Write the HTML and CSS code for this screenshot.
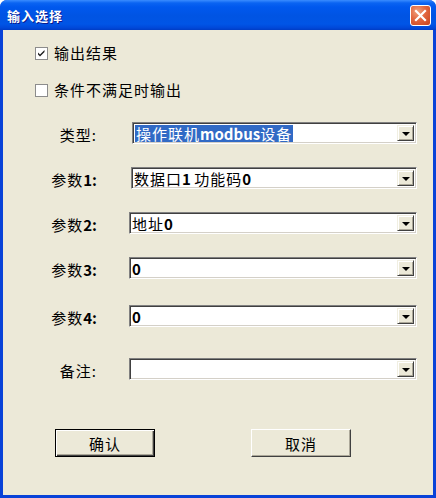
FILE: index.html
```html
<!DOCTYPE html>
<html lang="zh-CN">
<head>
<meta charset="utf-8">
<title>输入选择</title>
<link rel="stylesheet" href="styles.css">
</head>
<body>
<div class="window">
  <div class="titlebar">
    <span class="title">输入选择</span>
    <span class="close">
      <svg width="13" height="13" viewBox="0 0 13 13"><path d="M2 2 L11 11 M11 2 L2 11" stroke="#fff" stroke-width="2.2" stroke-linecap="square"/></svg>
    </span>
  </div>
  <div class="client">
    <div class="check-row">
      <span class="check"><svg width="11" height="11" viewBox="0 0 11 11"><path d="M2 4.5 L4 6.5 L8.5 2 L8.5 4 L4 8.5 L2 6.5 Z" fill="#1f1f1f"/></svg></span>
      <span class="check-text">输出结果</span>
    </div>
    <div class="check-row second">
      <span class="check"></span>
      <span class="check-text">条件不满足时输出</span>
    </div>
    <div class="form">
      <div class="row">
        <span class="lbl">类型:</span>
        <div class="combo shift"><span class="val"><span class="sel">操作联机<span class="lat">modbus</span>设备</span></span><span class="drop"><span class="tri"></span></span></div>
      </div>
      <div class="row">
        <span class="lbl">参数<span class="lat">1:</span></span>
        <div class="combo shift-sm"><span class="val">数据口<span class="lat">1&nbsp;</span>功能码<span class="lat">0</span></span><span class="drop"><span class="tri"></span></span></div>
      </div>
      <div class="row">
        <span class="lbl">参数<span class="lat">2:</span></span>
        <div class="combo"><span class="val">地址<span class="lat">0</span></span><span class="drop"><span class="tri"></span></span></div>
      </div>
      <div class="row">
        <span class="lbl">参数<span class="lat">3:</span></span>
        <div class="combo"><span class="val"><span class="lat">0</span></span><span class="drop"><span class="tri"></span></span></div>
      </div>
      <div class="row r5">
        <span class="lbl">参数<span class="lat">4:</span></span>
        <div class="combo"><span class="val"><span class="lat">0</span></span><span class="drop"><span class="tri"></span></span></div>
      </div>
      <div class="row r6">
        <span class="lbl">备注:</span>
        <div class="combo"><span class="val"></span><span class="drop"><span class="tri"></span></span></div>
      </div>
    </div>
    <div class="buttons">
      <span class="btn default">确认</span>
      <span class="btn">取消</span>
    </div>
  </div>
</div>
</body>
</html>
```

FILE: styles.css
```css
* { box-sizing: border-box; }
html, body { margin: 0; padding: 0; background: #ffffff; }
body {
  font-family: "Noto Sans CJK SC", "Noto Sans", sans-serif;
  color: #000;
}
.window {
  width: 436px;
  height: 498px;
  display: flex;
  flex-direction: column;
  border-radius: 7px 7px 0 0;
  overflow: hidden;
  background: #0842d8;
}
.titlebar {
  height: 30px;
  flex: none;
  display: flex;
  align-items: center;
  justify-content: space-between;
  padding: 0 4px 0 7px;
  background: linear-gradient(to bottom, #3a8cff 0px, #0a64f2 3px, #0058ee 7px, #0054e3 16px, #0055e6 24px, #0047d8 28px, #003cc4 30px);
}
.title {
  color: #fff;
  font-size: 13px;
  font-weight: bold;
  letter-spacing: 1px;
  text-shadow: 1px 1px 0 #0a1c8f;
  margin-top: 1px;
}
.close {
  width: 21px;
  height: 21px;
  margin-top: 1px;
  margin-right: 1px;
  border: 1px solid #fff;
  border-radius: 3px;
  background: radial-gradient(circle at 35% 30%, #f0a27f 0%, #e2663f 45%, #c7421b 100%);
  display: flex;
  align-items: center;
  justify-content: center;
}
.client {
  flex: 1;
  margin: 0 3px 3px 3px;
  background: #ece9d8;
  padding-top: 12px;
  display: flex;
  flex-direction: column;
  font-size: 15px;
  letter-spacing: 1px;
}
.check-row {
  height: 20px;
  display: flex;
  align-items: center;
  padding-left: 32px;
}
.check-row.second { margin-top: 17px; }
.check {
  width: 13px;
  height: 13px;
  margin-top: 3px;
  border: 1px solid #8c8c8c;
  background: #fff;
  display: flex;
  align-items: center;
  justify-content: center;
}
.check-text { margin-left: 6px; }
.form {
  margin-top: 23px;
  display: flex;
  flex-direction: column;
  gap: 23px;
}
.row {
  display: flex;
  align-items: center;
  height: 22px;
}
.row.r5 { margin-top: 3px; }
.row.r6 { margin-top: 8px; }
.lbl {
  width: 94px;
  text-align: right;
  flex: none;
  margin-top: 2px;
}
.lat { font-weight: bold; letter-spacing: 0; }
.combo {
  margin-left: 32px;
  width: 288px;
  height: 22px;
  display: flex;
  align-items: stretch;
  background: #fff;
  border: 1px solid;
  border-color: #808080 #ffffff #ffffff #808080;
  box-shadow: inset 1px 1px 0 #404040, inset -1px -1px 0 #d4d0c8;
  padding: 2px 2px 2px 2px;
}
.combo.shift { margin-left: 35px; width: 285px; }
.combo.shift-sm { margin-left: 34px; width: 286px; }
.val {
  flex: 1;
  display: flex;
  align-items: center;
  white-space: pre;
}
.sel {
  background: #316ac5;
  color: #fff;
  padding: 0 1px 0 1px;
  line-height: 17px;
}
.drop {
  width: 17px;
  flex: none;
  background: #ece9d8;
  border: 1px solid;
  border-color: #f1efe2 #404040 #404040 #f1efe2;
  box-shadow: inset 1px 1px 0 #fff, inset -1px -1px 0 #aca899;
  display: flex;
  align-items: center;
  justify-content: center;
}
.tri {
  width: 0;
  height: 0;
  border-left: 4px solid transparent;
  border-right: 4px solid transparent;
  border-top: 4px solid #000;
  margin-top: 1px;
}
.buttons {
  margin-top: 49px;
  display: flex;
  padding-left: 52px;
  gap: 96px;
}
.btn {
  width: 100px;
  height: 28px;
  display: flex;
  align-items: center;
  justify-content: center;
  background: #ece9d8;
  font-size: 15px;
  letter-spacing: 1px;
  border: 1px solid;
  border-color: #ffffff #404040 #404040 #ffffff;
  box-shadow: inset -1px -1px 0 #aca899;
}
.btn.default {
  border: 1px solid #000;
  box-shadow: inset 1px 1px 0 #fff, inset -1px -1px 0 #404040, inset -2px -2px 0 #aca899;
}
```
